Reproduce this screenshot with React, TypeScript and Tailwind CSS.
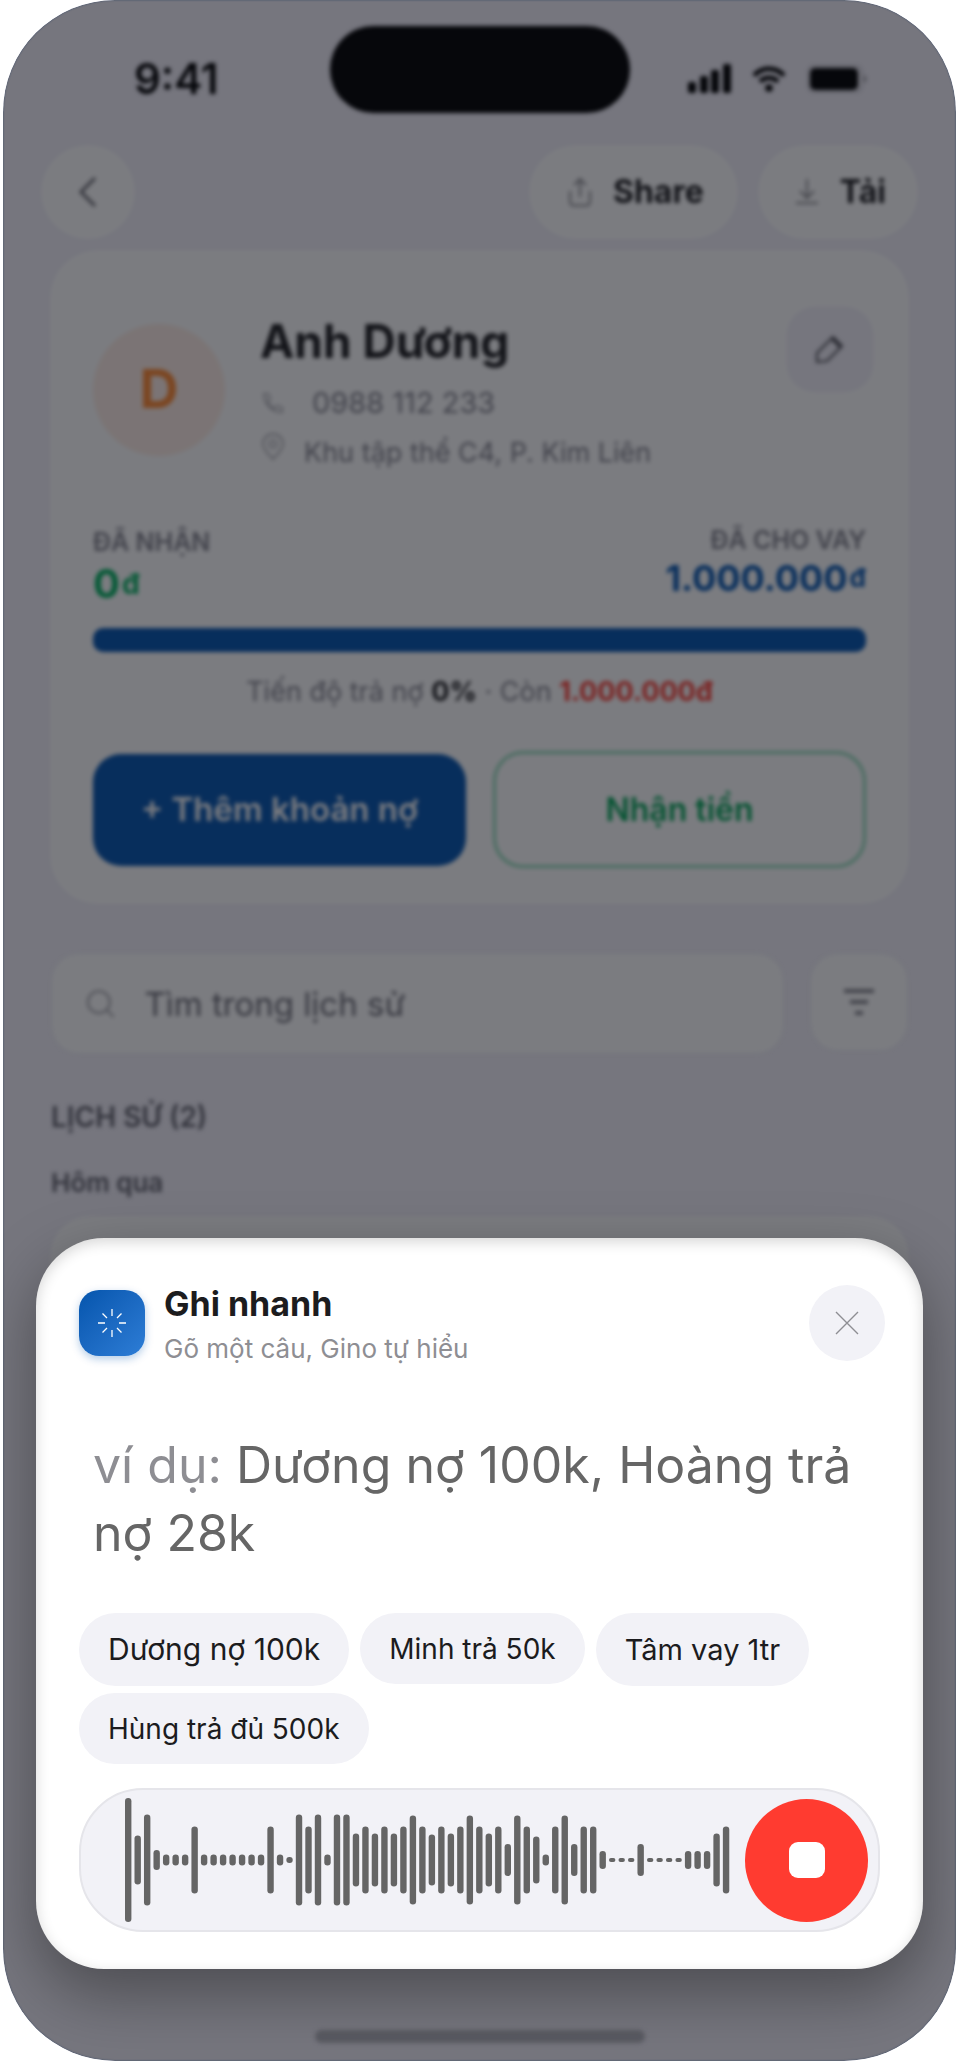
import { useState } from 'react';

type Suggestion = { label: string; className: string };

const SUGGESTIONS: Suggestion[] = [
  { label: 'Dương nợ 100k', className: 'h-[73px] text-[30px]' },
  { label: 'Minh trả 50k', className: 'h-[71px] text-[28px]' },
  { label: 'Tâm vay 1tr', className: 'h-[73px] text-[29px]' },
  { label: 'Hùng trả đủ 500k', className: 'h-[71px] text-[28px]' },
];

// bar heights of the recorded voice
const WAVE = [
  124, 49, 91, 20, 11, 11, 11, 67, 11, 11, 11, 11, 11, 11, 11, 67,
  11, 6, 91, 67, 91, 11, 91, 91, 53, 67, 53, 67, 53, 67, 89, 67,
  51, 67, 53, 67, 89, 67, 53, 67, 32, 89, 67, 47, 11, 67, 89, 32,
  67, 67, 18, 4, 4, 4, 32, 4, 4, 4, 4, 18, 18, 18, 53, 67,
];

function StatusBar() {
  return (
    <div className="grid grid-cols-[1fr_300px_1fr] pt-[26px]">
      <div className="flex items-center justify-center pl-5 pt-[18px] text-[42px] font-semibold leading-none text-black">
        9:41
      </div>
      <div className="h-[87px] rounded-full bg-black" />
      <div className="flex items-center justify-center gap-[21px] pr-[30px] pt-[18px]">
        <svg width="43" height="30" viewBox="0 0 43 30" fill="#000" aria-hidden="true">
          <rect x="0" y="18" width="8" height="11" rx="2" />
          <rect x="12" y="12" width="8" height="17" rx="2" />
          <rect x="23" y="6" width="8" height="23" rx="2" />
          <rect x="35" y="0" width="8" height="29" rx="2" />
        </svg>
        <svg width="34" height="28" viewBox="0 0 34 28" fill="none" stroke="#000" strokeWidth="4.600" aria-hidden="true">
          <path d="M2 10.500C10.500 1.500 23.500 1.500 32 10.500" />
          <path d="M8 16.500C13 11.500 21 11.500 26 16.500" />
          <circle cx="17" cy="23" r="3.800" fill="#000" stroke="none" />
        </svg>
        <svg width="61" height="28" viewBox="0 0 61 28" aria-hidden="true">
          <rect x="1" y="1" width="54" height="26" rx="7" fill="none" stroke="#000" strokeOpacity="0.15" strokeWidth="2" />
          <rect x="3" y="3" width="48" height="22" rx="5" fill="#000" />
          <path d="M57 10c3 1 3 7 0 8z" fill="#000" fillOpacity="0.4" />
        </svg>
      </div>
    </div>
  );
}

function TopBar() {
  return (
    <div className="mt-8 flex items-center justify-between pl-[38px] pr-[38px]">
      <button aria-label="Quay lại" className="flex size-[94px] items-center justify-center rounded-full bg-white">
        <svg width="20" height="32" viewBox="0 0 20 32" fill="none" stroke="#66666e" strokeWidth="3" aria-hidden="true">
          <path d="M17 2L3 16l14 14" />
        </svg>
      </button>
      <div className="flex gap-5">
        <button className="flex h-[94px] items-center gap-[22px] rounded-full bg-white pl-10 pr-[34px] text-[32px] font-bold text-[#1c1c1e]">
          <svg width="22" height="30" viewBox="0 0 22 30" fill="none" stroke="#8e8e93" strokeWidth="2" aria-hidden="true">
            <path d="M11 20V2M5 8l6-6 6 6M1 14v10c0 3 1.500 4.500 4.500 4.500h11c3 0 4.500-1.500 4.500-4.500V14" />
          </svg>
          Share
        </button>
        <button className="flex h-[94px] items-center gap-[22px] rounded-full bg-white pl-[38px] pr-8 text-[32px] font-bold text-[#1c1c1e]">
          <svg width="22" height="28" viewBox="0 0 22 28" fill="none" stroke="#8e8e93" strokeWidth="2" aria-hidden="true">
            <path d="M11 1v19M4 13l7 7 7-7M0 25h22" />
          </svg>
          Tải
        </button>
      </div>
    </div>
  );
}

function CustomerCard() {
  return (
    <section className="mx-[47px] mt-[11px] rounded-[48px] bg-white pb-9 pl-[43px] pr-[43px] pt-[57px]">
      <div className="flex items-start">
        <div className="mt-[17px] flex size-[132px] shrink-0 items-center justify-center rounded-full bg-[#ffeee6] pb-1 text-[54px] font-bold text-[#ff8a33]">
          D
        </div>
        <div className="ml-[35px] flex-1 pt-1.5 text-[#83838d]">
          <h1 className="text-[46px] font-bold leading-[56px] text-[#1c1c1e]">Anh Dương</h1>
          <p className="mt-4 flex h-9 items-center text-[29px]">
            <svg className="ml-0.5 mr-7" width="22" height="22" viewBox="0 0 24 24" fill="none" stroke="#b5b5ba" strokeWidth="2" aria-hidden="true">
              <path d="M2 2h5l2 6-3 2.500c1.500 3.500 4 6 7.500 7.500L16 15l6 2v5C11 22 2 13 2 2z" />
            </svg>
            0988 112 233
          </p>
          <p className="mt-3.5 flex h-9 items-center text-[27px]">
            <svg className="mb-3 ml-0.5 mr-5" width="22" height="28" viewBox="0 0 22 28" fill="none" stroke="#b5b5ba" strokeWidth="2" aria-hidden="true">
              <path d="M11 26C8 23 1 16 1 11a10 10 0 0 1 20 0c0 5-7 12-10 15z" />
              <circle cx="11" cy="11" r="3.500" />
            </svg>
            Khu tập thể C4, P. Kim Liên
          </p>
        </div>
        <button aria-label="Sửa" className="-mr-[7px] flex h-[85px] w-[86px] items-center justify-center rounded-[28px] bg-[#f3f1fa]">
          <svg width="30" height="30" viewBox="0 0 30 30" fill="none" stroke="#55555c" strokeWidth="2.200" strokeLinejoin="round" aria-hidden="true">
            <path d="M2 27v-9L18 2l9 9-15 15z" />
            <path d="M17 3l9 9" strokeWidth="4" />
          </svg>
        </button>
      </div>

      <div className="mt-[55px] flex justify-between">
        <div className="pt-0.5">
          <div className="text-[25px] font-semibold leading-7 text-[#83838d]">ĐÃ NHẬN</div>
          <div className="mt-2 flex items-start gap-0.5 text-[40px] font-bold leading-10 text-[#00b35f]">
            0<span className="text-[28px]">đ</span>
          </div>
        </div>
        <div className="text-right">
          <div className="text-[25px] font-semibold leading-7 text-[#83838d]">ĐÃ CHO VAY</div>
          <div className="mt-1 flex items-start justify-end gap-0.5 text-[36px] font-bold leading-10 text-[#0455b0]">
            1.000.000<span className="text-[26px]">đ</span>
          </div>
        </div>
      </div>

      <div className="mt-6 h-6 rounded-[10px] bg-[#0455b0]" />
      <p className="mt-[22px] text-center text-[27px] leading-9 text-[#83838d]">
        Tiến độ trả nợ <b className="text-[#1c1c1e]">0%</b> · Còn <b className="text-[#ff3b30]">1.000.000đ</b>
      </p>

      <div className="mt-[41px] grid grid-cols-2 items-center gap-[27px]">
        <button className="h-28 rounded-[28px] bg-[#0455b0] text-[33px] font-semibold text-white">
          + Thêm khoản nợ
        </button>
        <button className="h-[117px] rounded-[30px] border-[3px] border-[#8fdcb9] text-[32px] font-semibold text-[#00a656]">
          Nhận tiền
        </button>
      </div>
    </section>
  );
}

function History() {
  return (
    <section className="text-[26px] font-semibold leading-8 text-[#5f5f69]">
      <div className="mx-12 mt-[49px] flex items-start gap-[26px]">
        <label className="flex h-[101px] flex-1 items-center gap-[30px] rounded-[28px] border-2 border-[#f6f6f9] bg-white pl-[34px] pr-8">
          <svg width="30" height="30" viewBox="0 0 30 30" fill="none" stroke="#9a9aa0" strokeWidth="2" aria-hidden="true">
            <circle cx="13" cy="13" r="12" />
            <path d="M21.500 21.500L29 29" />
          </svg>
          <input
            type="search"
            aria-label="Tìm trong lịch sử"
            placeholder="Tìm trong lịch sử"
            className="w-full min-w-0 bg-transparent text-[33px] font-normal outline-none placeholder:text-[#6c6c75]"
          />
        </label>
        <button aria-label="Lọc" className="flex h-[98px] w-[98px] items-center justify-center rounded-[28px] border-2 border-[#f6f6f9] bg-white">
          <svg width="30" height="28" viewBox="0 0 30 28" stroke="#77777f" strokeWidth="3.500" aria-hidden="true">
            <path d="M0 3h30M6 14h18M11 25h8" />
          </svg>
        </button>
      </div>
      <h2 className="mx-12 mt-[47px] text-[28px]">LỊCH SỬ (2)</h2>
      <h3 className="mx-12 mt-[34px]">Hôm qua</h3>
      <div className="mx-[47px] mt-[17px] h-80 rounded-[40px] bg-white" />
    </section>
  );
}

function Waveform() {
  return (
    <svg viewBox="0 0 605 126" className="w-[605px] min-w-0 shrink" fill="#656565" aria-hidden="true">
      {WAVE.map((h, i) => (
        <rect key={i} x={i * 9.49} y={63 - h / 2} width="6.4" height={h} rx={Math.min(3.2, h / 2)} />
      ))}
    </svg>
  );
}

function QuickNoteSheet() {
  const [text, setText] = useState('');

  return (
    <div
      role="dialog"
      aria-label="Ghi nhanh"
      className="absolute inset-x-[33px] bottom-[92px] rounded-[68px] bg-white pb-[37px] pl-[43px] pr-[38px] pt-[47px] shadow-[0_24px_64px_rgba(0,0,0,0.36),inset_0_4px_14px_rgba(0,0,0,0.16)]"
    >
      <header className="flex items-start">
        <div className="mt-[5px] flex size-[66px] items-center justify-center rounded-[20px] bg-linear-to-br from-[#0455ad] to-[#2d7dd6] shadow-[0_3px_8px_rgba(4,85,176,0.3)]">
          <svg width="28" height="28" viewBox="0 0 28 28" stroke="#fff" strokeWidth="1.300" aria-hidden="true">
            <path d="M14 0v7M14 21v7M0 14h7M21 14h7M4.500 4.500l4.500 4.500M19 19l4.500 4.500M4.500 23.500L9 19M19 9l4.500-4.500" />
          </svg>
        </div>
        <div className="-mt-px ml-[19px] flex-1">
          <h2 className="text-[34px] font-bold leading-10 text-[#1c1c1e]">Ghi nhanh</h2>
          <p className="mt-[9px] text-[26px] leading-8 text-[#8e8e93]">Gõ một câu, Gino tự hiểu</p>
        </div>
        <button aria-label="Đóng" className="flex size-[76px] items-center justify-center rounded-full bg-[#f2f2f7]">
          <svg width="24" height="24" viewBox="0 0 24 24" stroke="#8e8e93" strokeWidth="1.400" aria-hidden="true">
            <path d="M1 1l22 22M23 1L1 23" />
          </svg>
        </button>
      </header>

      <div className="mt-[66px] grid text-[50px] leading-[68px]">
        <label htmlFor="note" className="pointer-events-none px-[14px] text-[#666] [grid-area:1/1]">
          {!text && (
            <>
              <span className="text-[#8e8e93]">ví dụ:</span> Dương nợ 100k, Hoàng trả
              <br />
              nợ 28k
            </>
          )}
        </label>
        <textarea
          id="note"
          rows={2}
          value={text}
          onChange={(e) => setText(e.target.value)}
          className="resize-none bg-transparent px-[14px] text-[#1c1c1e] outline-none [grid-area:1/1]"
        />
      </div>

      <div className="mt-[46px] flex flex-wrap items-start gap-x-[11px] gap-y-[7px]">
        {SUGGESTIONS.map((s) => (
          <button
            key={s.label}
            onClick={() => setText(s.label)}
            className={`rounded-full bg-[#f2f2f7] px-[29px] text-[#1c1c1e] ${s.className}`}
          >
            {s.label}
          </button>
        ))}
      </div>

      <div className="mr-[5px] mt-6 flex h-36 items-center justify-between rounded-[64px] border-2 border-[#e5e5ea] bg-[#f2f2f7] pl-11 pr-2.5">
        <Waveform />
        <button aria-label="Dừng ghi âm" className="flex size-[123px] shrink-0 items-center justify-center rounded-full bg-[#ff3b30]">
          <span className="size-9 rounded-[9px] bg-white" />
        </button>
      </div>
    </div>
  );
}

export default function App() {
  return (
    <main className="flex min-h-screen bg-white pb-px pl-[3px] pr-px font-['Inter',sans-serif]">
      <div className="relative flex flex-1 flex-col overflow-hidden rounded-[112px] bg-[#f3f1fa]">
        <div className="flex flex-1 flex-col blur-[2px]">
          <StatusBar />
          <TopBar />
          <CustomerCard />
          <History />
          <div className="mx-auto mb-[18px] mt-auto h-[13px] w-[330px] rounded-full bg-[#b5b5bd]" />
        </div>
        {/* dim layer */}
        <div className="absolute inset-0 rounded-[112px] bg-[rgba(12,13,20,0.54)] shadow-[inset_0_0_2px_rgba(20,50,90,0.7)]" />
        <QuickNoteSheet />
      </div>
    </main>
  );
}
